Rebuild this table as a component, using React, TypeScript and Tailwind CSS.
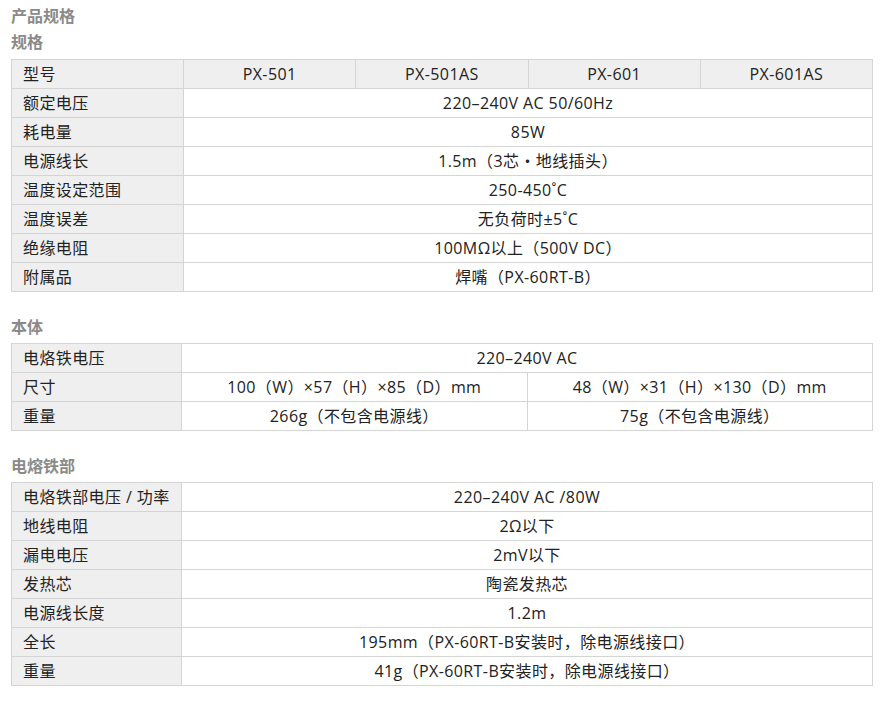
const font = { fontFamily: '"Open Sans", "Noto Sans CJK SC", sans-serif' };

type Row = { label: string; cells: string[] };

const specRows: Row[] = [
  { label: "额定电压", cells: ["220–240V AC 50/60Hz"] },
  { label: "耗电量", cells: ["85W"] },
  { label: "电源线长", cells: ["1.5m（3芯・地线插头）"] },
  { label: "温度设定范围", cells: ["250-450˚C"] },
  { label: "温度误差", cells: ["无负荷时±5˚C"] },
  { label: "绝缘电阻", cells: ["100MΩ以上（500V DC）"] },
  { label: "附属品", cells: ["焊嘴（PX-60RT-B）"] },
];

const bodyRows: Row[] = [
  { label: "电烙铁电压", cells: ["220–240V AC"] },
  { label: "尺寸", cells: ["100（W）×57（H）×85（D）mm", "48（W）×31（H）×130（D）mm"] },
  { label: "重量", cells: ["266g（不包含电源线）", "75g（不包含电源线）"] },
];

const ironRows: Row[] = [
  { label: "电烙铁部电压 / 功率", cells: ["220–240V AC /80W"] },
  { label: "地线电阻", cells: ["2Ω以下"] },
  { label: "漏电电压", cells: ["2mV以下"] },
  { label: "发热芯", cells: ["陶瓷发热芯"] },
  { label: "电源线长度", cells: ["1.2m"] },
  { label: "全长", cells: ["195mm（PX-60RT-B安装时，除电源线接口）"] },
  { label: "重量", cells: ["41g（PX-60RT-B安装时，除电源线接口）"] },
];

function Heading({ children }: { children: string }) {
  return <div className="h-[26px] leading-[26px] text-[16px] font-bold text-[#8a8a8a]">{children}</div>;
}

function SpecTable({ rows, labelW, header }: { rows: Row[]; labelW: string; header?: Row }) {
  const all = header ? [header, ...rows] : rows;
  return (
    <div className="w-[862px] border-t border-l border-[#d4d4d4] text-[16px] tracking-[0.4px] text-[#222]">
      {all.map((r, i) => {
        const isHead = header && i === 0;
        return (
          <div key={i} className={`flex h-[29px] border-b border-[#d4d4d4] ${isHead ? "bg-[#efefef]" : ""}`}>
            <div className={`${labelW} shrink-0 flex items-center pl-[11px] bg-[#efefef] border-r border-[#d4d4d4]`}>{r.label}</div>
            {r.cells.map((c, j) => (
              <div key={j} className="flex-1 flex items-center justify-center border-r border-[#d4d4d4] whitespace-nowrap">
                {c}
              </div>
            ))}
          </div>
        );
      })}
    </div>
  );
}

export default function App() {
  return (
    <div className="w-[886px] h-[702px] bg-white pl-[11px] pt-[3px]" style={font}>
      <Heading>产品规格</Heading>
      <Heading>规格</Heading>
      <div className="mt-[4px]">
        <SpecTable labelW="w-[172px]" header={{ label: "型号", cells: ["PX-501", "PX-501AS", "PX-601", "PX-601AS"] }} rows={specRows} />
      </div>
      <div className="mt-[22px]">
        <Heading>本体</Heading>
      </div>
      <div className="mt-[3px]">
        <SpecTable labelW="w-[170px]" rows={bodyRows} />
      </div>
      <div className="mt-[22px]">
        <Heading>电熔铁部</Heading>
      </div>
      <div className="mt-[3px]">
        <SpecTable labelW="w-[170px]" rows={ironRows} />
      </div>
    </div>
  );
}
